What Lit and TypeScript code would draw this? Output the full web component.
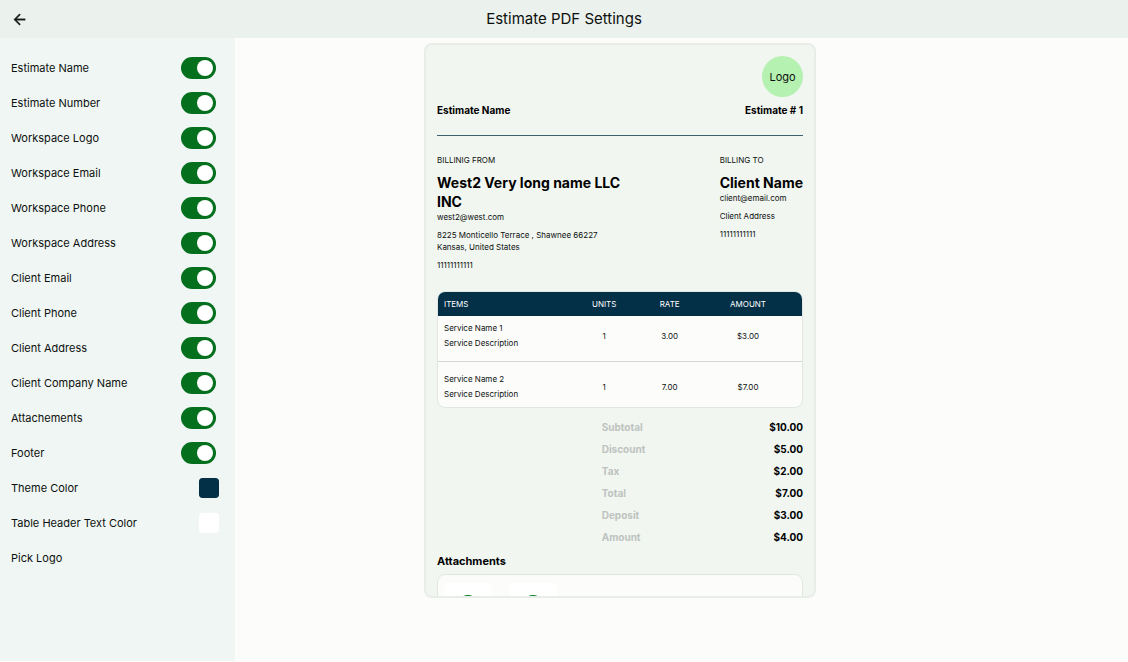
import { LitElement, html, css } from "lit";
import { customElement } from "lit/decorators.js";

interface Party {
  heading: string;
  name: string;
  email: string;
  address: string;
  phone: string;
}

const TOGGLES = [
  "Estimate Name",
  "Estimate Number",
  "Workspace Logo",
  "Workspace Email",
  "Workspace Phone",
  "Workspace Address",
  "Client Email",
  "Client Phone",
  "Client Address",
  "Client Company Name",
  "Attachements",
  "Footer",
];

const ITEMS = [
  { name: "Service Name 1", note: "Service Description", units: "1", rate: "3.00", amount: "$3.00" },
  { name: "Service Name 2", note: "Service Description", units: "1", rate: "7.00", amount: "$7.00" },
];

const TOTALS = [
  ["Subtotal", "$10.00"],
  ["Discount", "$5.00"],
  ["Tax", "$2.00"],
  ["Total", "$7.00"],
  ["Deposit", "$3.00"],
  ["Amount", "$4.00"],
];

const FROM: Party = {
  heading: "BILLINIG FROM",
  name: "West2 Very long name LLC INC",
  email: "west2@west.com",
  address: "8225 Monticello Terrace , Shawnee 66227 Kansas, United States",
  phone: "11111111111",
};

const TO: Party = {
  heading: "BILLING TO",
  name: "Client Name",
  email: "client@email.com",
  address: "Client Address",
  phone: "11111111111",
};

@customElement("settings-panel")
class SettingsPanel extends LitElement {
  static styles = css`
    :host {
      display: block;
      box-sizing: border-box;
      padding: 12px 16px 12px 11px;
      background: #f0f6f3;
    }
    .row {
      display: flex;
      align-items: center;
      justify-content: space-between;
      height: 35px;
      font-size: 11px;
      color: #0c100e;
    }
    .toggle {
      appearance: none;
      display: flex;
      align-items: center;
      justify-content: flex-end;
      box-sizing: border-box;
      width: 35px;
      height: 22px;
      margin: 0 3px 0 0;
      padding: 0 3px;
      border-radius: 11px;
      background: #b9c4bc;
      cursor: pointer;
    }
    .toggle::before {
      content: "";
      width: 16px;
      height: 16px;
      border-radius: 50%;
      background: #fff;
    }
    .toggle:checked {
      background: #04701e;
    }
    .toggle:not(:checked) {
      justify-content: flex-start;
    }
    .swatch {
      appearance: none;
      width: 20px;
      height: 20px;
      margin: 0;
      padding: 0;
      border: 0;
      border-radius: 3px;
      background: none;
      overflow: hidden;
      cursor: pointer;
    }
    .swatch::-webkit-color-swatch-wrapper {
      padding: 0;
    }
    .swatch::-webkit-color-swatch {
      border: 0;
      border-radius: 3px;
    }
    .pick {
      width: 100%;
      padding: 0;
      border: 0;
      background: none;
      font-family: inherit;
      text-align: left;
      cursor: pointer;
    }
  `;

  render() {
    return html`
      ${TOGGLES.map(
        (label, i) => html`
          <div class="row">
            <label for="toggle-${i}">${label}</label>
            <input class="toggle" id="toggle-${i}" type="checkbox" role="switch" checked />
          </div>
        `
      )}
      <div class="row">
        <label for="theme">Theme Color</label>
        <input class="swatch" id="theme" type="color" value="#033047" />
      </div>
      <div class="row">
        <label for="head-text">Table Header Text Color</label>
        <input class="swatch" id="head-text" type="color" value="#ffffff" />
      </div>
      <button class="row pick" type="button">Pick Logo</button>
    `;
  }
}

@customElement("estimate-preview")
class EstimatePreview extends LitElement {
  static styles = css`
    :host {
      display: block;
      box-sizing: border-box;
      padding: 11px;
      border: 2px solid #e9edea;
      border-radius: 8px;
      background: #f1f6f1;
      overflow: hidden;
      color: #0c100e;
      font-size: 8px;
      line-height: 12px;
    }
    p,
    h2,
    h3,
    dl,
    dd {
      margin: 0;
    }
    .logo {
      display: flex;
      align-items: center;
      justify-content: center;
      width: 41px;
      height: 41px;
      margin-left: auto;
      border-radius: 50%;
      background: #b5f1b0;
      font-size: 11px;
    }
    .title {
      display: flex;
      justify-content: space-between;
      padding: 7px 0 19px;
      border-bottom: 1px solid #3c626c;
      color: #000;
      font-size: 10px;
      font-weight: 700;
    }
    .parties {
      display: flex;
      justify-content: space-between;
      padding: 18px 0 20px;
    }
    .party {
      display: flex;
      flex-direction: column;
      max-width: 184px;
    }
    .party h2 {
      margin-top: 7px;
      color: #000;
      font-size: 14px;
      line-height: 19px;
      font-weight: 700;
    }
    .line + .line {
      margin-top: 6px;
    }
    .frame {
      border: 1px solid #e0e7e3;
      border-radius: 8px;
      background: #fcfdfb;
      overflow: hidden;
    }
    table {
      width: 100%;
      table-layout: fixed;
      border-collapse: collapse;
    }
    th {
      height: 24px;
      padding: 0;
      background: #033047;
      color: #fff;
      font-weight: 400;
    }
    td {
      padding: 5px 0 10px;
      text-align: center;
      line-height: 15px;
    }
    tr + tr td {
      padding: 10px 0 5px;
      border-top: 1px solid #d3d9d5;
    }
    .item,
    tr + tr .item {
      width: 36%;
      padding-left: 6px;
      text-align: left;
    }
    .units {
      width: 16%;
    }
    .rate {
      width: 20%;
    }
    .amount,
    tr + tr .amount {
      padding-right: 12px;
    }
    .totals {
      margin: 8px 0 0 45%;
      font-size: 10px;
      line-height: 22px;
      font-weight: 700;
    }
    .total {
      display: flex;
      justify-content: space-between;
    }
    .total dt {
      color: #bec3bf;
    }
    .total dd {
      color: #000;
    }
    h3 {
      padding: 6px 0;
      color: #000;
      font-size: 11px;
      line-height: 14px;
      font-weight: 700;
    }
    .files {
      display: flex;
      gap: 17px;
      padding: 8px 6px;
    }
    .file {
      display: flex;
      justify-content: center;
      box-sizing: border-box;
      width: 48px;
      height: 48px;
      padding-top: 12px;
      border-radius: 6px;
      background: #fff;
    }
  `;

  private party(p: Party) {
    return html`
      <section class="party">
        <p>${p.heading}</p>
        <h2>${p.name}</h2>
        <p class="line">${p.email}</p>
        <p class="line">${p.address}</p>
        <p class="line">${p.phone}</p>
      </section>
    `;
  }

  private file() {
    return html`
      <div class="file">
        <svg width="22" height="22" viewBox="0 0 22 22" aria-hidden="true">
          <circle cx="11" cy="11" r="11" fill="#04801e" />
          <path d="M11 6v9M7 11l4 4 4-4" fill="none" stroke="#fff" stroke-width="2" />
        </svg>
      </div>
    `;
  }

  render() {
    return html`
      <div class="logo">Logo</div>
      <div class="title"><span>Estimate Name</span><span>Estimate # 1</span></div>
      <div class="parties">${this.party(FROM)}${this.party(TO)}</div>
      <div class="frame">
        <table>
          <thead>
            <tr>
              <th class="item">ITEMS</th>
              <th class="units">UNITS</th>
              <th class="rate">RATE</th>
              <th class="amount">AMOUNT</th>
            </tr>
          </thead>
          <tbody>
            ${ITEMS.map(
              (it) => html`
                <tr>
                  <td class="item"><p>${it.name}</p><p>${it.note}</p></td>
                  <td>${it.units}</td>
                  <td>${it.rate}</td>
                  <td class="amount">${it.amount}</td>
                </tr>
              `
            )}
          </tbody>
        </table>
      </div>
      <dl class="totals">
        ${TOTALS.map(([k, v]) => html`<div class="total"><dt>${k}</dt><dd>${v}</dd></div>`)}
      </dl>
      <h3>Attachments</h3>
      <div class="frame files">${this.file()}${this.file()}</div>
    `;
  }
}

@customElement("app-root")
class AppRoot extends LitElement {
  static styles = css`
    :host {
      display: flex;
      flex-direction: column;
      min-height: 100vh;
      background: #fcfdfb;
      font-family: Inter, "Liberation Sans", sans-serif;
    }
    .bar {
      display: grid;
      grid-template-columns: 38px 1fr 38px;
      align-items: center;
      height: 38px;
      background: #ebf1ec;
    }
    .back {
      display: flex;
      align-items: center;
      justify-content: center;
      height: 38px;
      padding: 0;
      border: 0;
      background: none;
      cursor: pointer;
    }
    h1 {
      margin: 0;
      color: #0c100e;
      font-size: 15px;
      line-height: 20px;
      font-weight: 400;
      text-align: center;
    }
    .body {
      display: flex;
      flex: 1;
    }
    .side {
      flex: 0 0 235px;
      margin-bottom: 1px;
    }
    .main {
      flex: 1;
      padding: 5px 16px 0 189px;
    }
    .sheet {
      max-width: 392px;
      max-height: calc(100vh - 107px);
    }
  `;

  render() {
    return html`
      <header class="bar">
        <button class="back" type="button" aria-label="Back">
          <svg width="17" height="17" viewBox="0 0 24 24" aria-hidden="true">
            <path d="M20 11H7.83l5.59-5.59L12 4l-8 8 8 8 1.41-1.41L7.83 13H20v-2z" fill="#141816" stroke="#141816" stroke-width="0.5" />
          </svg>
        </button>
        <h1>Estimate PDF Settings</h1>
      </header>
      <div class="body">
        <settings-panel class="side"></settings-panel>
        <main class="main"><estimate-preview class="sheet"></estimate-preview></main>
      </div>
    `;
  }
}
